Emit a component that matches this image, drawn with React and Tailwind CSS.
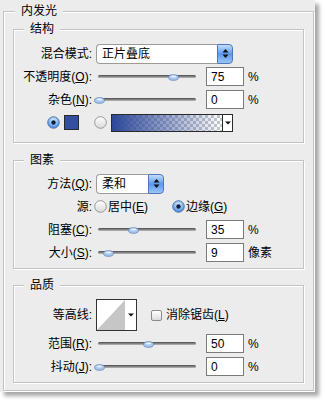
import React from "react";

// ─── small pieces ─────────────────────────────────────────────────────────────
function Key({ t, k }) {
  return (
    <>
      {t}
      {k && (
        <>
          (<span className="underline">{k}</span>)
        </>
      )}
      :
    </>
  );
}

function Group({ title, legendMl = "ml-[10px]", className = "", children }) {
  return (
    <div
      className={`border border-[#c3c3c3] shadow-[1px_1px_0_#fff,inset_1px_1px_0_#fff] ${className}`}
    >
      <div
        className={`-mt-[7px] ${legendMl} w-fit h-[12px] bg-[#ececec] px-[6px] text-[12px] leading-[12px]`}
      >
        {title}
      </div>
      {children}
    </div>
  );
}

function Row({ label, h = "h-[23px]", children }) {
  return (
    <div className={`flex items-center ${h}`}>
      <div className="w-[78px] text-right whitespace-nowrap">{label}</div>
      <div className="ml-[4px] flex items-center">{children}</div>
    </div>
  );
}

function Select({ w, value }) {
  return (
    <div className={`flex h-[20px] ${w}`}>
      <div className="flex-1 flex items-center pl-[5px] bg-white border border-[#9b9b9b] border-r-0 rounded-l-[4px]">
        {value}
      </div>
      <div className="w-[16px] flex items-center justify-center rounded-r-[4px] border border-[#4e78bb] bg-gradient-to-b from-[#c4ddfb] via-[#5b97ec] to-[#9cc5f7]">
        <svg width="7" height="11" viewBox="0 0 7 11">
          <polygon points="0.5,4.5 3.5,1 6.5,4.5" fill="#111" />
          <polygon points="0.5,6.5 3.5,10 6.5,6.5" fill="#111" />
        </svg>
      </div>
    </div>
  );
}

function Slider({ knob }) {
  return (
    <div className="relative w-[102px] h-[12px] flex items-center">
      <div className="ml-[2px] w-[98px] h-[3px] rounded-full bg-gradient-to-b from-[#4a4a4a] to-[#bdbdbd]" />
      <svg
        className="absolute top-[3px]"
        style={{ left: knob - 5 }}
        width="11"
        height="7"
        viewBox="0 0 11 7"
      >
        <ellipse cx="5.5" cy="3.5" rx="5" ry="2.8" fill="#a9c7ee" stroke="#6d8cbd" strokeWidth="0.9" />
        <ellipse cx="5.5" cy="2.6" rx="3" ry="1" fill="#e4f0ff" />
      </svg>
    </div>
  );
}

function Field({ v }) {
  return (
    <div className="ml-[8px] w-[38px] h-[19px] flex items-center pl-[4px] bg-white border border-[#7b7b7b]">
      {v}
    </div>
  );
}

function Radio({ on }) {
  return (
    <svg width="13" height="13" viewBox="0 0 13 13">
      <defs>
        <radialGradient id="rOn" cx="50%" cy="35%" r="65%">
          <stop offset="0%" stopColor="#e6f3ff" />
          <stop offset="60%" stopColor="#7fb4ee" />
          <stop offset="100%" stopColor="#3d7ed6" />
        </radialGradient>
        <linearGradient id="rOff" x1="0" y1="0" x2="0" y2="1">
          <stop offset="0%" stopColor="#ffffff" />
          <stop offset="100%" stopColor="#d9d9d9" />
        </linearGradient>
      </defs>
      <circle
        cx="6.5"
        cy="6.5"
        r="5.8"
        fill={on ? "url(#rOn)" : "url(#rOff)"}
        stroke={on ? "#4f74ad" : "#8e8e8e"}
        strokeWidth="0.9"
      />
      {on && <circle cx="6.5" cy="6.5" r="2.2" fill="#0e1f3f" />}
    </svg>
  );
}

// ─── Main ─────────────────────────────────────────────────────────────────────
export default function App() {
  return (
    <div className="w-[325px] h-[400px] bg-white font-['Liberation_Sans','Noto_Sans_CJK_SC',sans-serif] text-[12px] leading-none text-black">
      <div className="w-[315px] h-[392px] bg-[#ececec] shadow-[4px_4px_4px_rgba(0,0,0,0.35)] pt-[11px] pl-[3px]">
        <Group title="内发光" legendMl="ml-[11px]" className="w-[311px] pb-[7px]">
          {/* 结构 */}
          <Group title="结构" className="mx-[9px] mt-[12px] pb-[8px]">
            <div className="mt-[7px]">
              <Row label={<Key t="混合模式" />}>
                <Select w="w-[137px]" value="正片叠底" />
              </Row>
              <Row label={<Key t="不透明度" k="O" />}>
                <Slider knob={77} />
                <Field v="75" />
                <span className="ml-[4px]">%</span>
              </Row>
              <Row label={<Key t="杂色" k="N" />}>
                <Slider knob={3} />
                <Field v="0" />
                <span className="ml-[4px]">%</span>
              </Row>
              <div className="flex items-center h-[23px] pl-[33px]">
                <Radio on />
                <div className="ml-[4px] w-[15px] h-[15px] bg-[#33509e] border border-[#2a2a2a]" />
                <div className="ml-[15px]">
                  <Radio />
                </div>
                <div className="ml-[4px] flex h-[18px] w-[122px] border border-[#2a2a2a]">
                  <div className="flex-1 bg-[linear-gradient(to_right,#2c4799,rgba(44,71,153,0.55)_45%,rgba(44,71,153,0)),repeating-conic-gradient(#c9c9c9_0_25%,#ffffff_0_50%)] bg-[length:100%_100%,6px_6px]" />
                  <div className="w-[10px] flex items-center justify-center bg-white border-l border-[#2a2a2a]">
                    <svg width="6" height="4" viewBox="0 0 6 4">
                      <polygon points="0,0.5 6,0.5 3,3.5" fill="#111" />
                    </svg>
                  </div>
                </div>
              </div>
            </div>
          </Group>

          {/* 图素 */}
          <Group title="图素" className="mx-[9px] mt-[17px] pb-[4px]">
            <div className="mt-[6px]">
              <Row label={<Key t="方法" k="Q" />}>
                <Select w="w-[68px]" value="柔和" />
              </Row>
              <Row label={<Key t="源" />}>
                <div className="-ml-[2px] w-[78px] flex items-center">
                  <Radio />
                  <span className="ml-[1px]">
                    居中(<span className="underline">E</span>)
                  </span>
                </div>
                <Radio on />
                <span className="ml-[1px]">
                  边缘(<span className="underline">G</span>)
                </span>
              </Row>
              <Row label={<Key t="阻塞" k="C" />}>
                <Slider knob={37} />
                <Field v="35" />
                <span className="ml-[4px]">%</span>
              </Row>
              <Row label={<Key t="大小" k="S" />}>
                <Slider knob={12} />
                <Field v="9" />
                <span className="ml-[4px]">像素</span>
              </Row>
            </div>
          </Group>

          {/* 品质 */}
          <Group title="品质" className="mx-[9px] mt-[16px] pb-[4px]">
            <div className="mt-[7px]">
              <Row label={<Key t="等高线" />} h="h-[34px]">
                <div className="flex w-[41px] h-[32px] border border-[#333] bg-white">
                  <svg width="28" height="30" viewBox="0 0 28 30">
                    <rect width="28" height="30" fill="#fff" />
                    <polygon points="0,30 28,0 28,30" fill="#c6c6c6" />
                  </svg>
                  <div className="flex-1 flex items-center justify-center">
                    <svg width="6" height="4" viewBox="0 0 6 4">
                      <polygon points="0,0.5 6,0.5 3,3.5" fill="#111" />
                    </svg>
                  </div>
                </div>
                <div className="ml-[14px] w-[11px] h-[11px] rounded-[2px] border border-[#8a8a8a] bg-gradient-to-b from-white to-[#dcdcdc]" />
                <span className="ml-[4px]">
                  消除锯齿(<span className="underline">L</span>)
                </span>
              </Row>
              <Row label={<Key t="范围" k="R" />}>
                <Slider knob={52} />
                <Field v="50" />
                <span className="ml-[4px]">%</span>
              </Row>
              <Row label={<Key t="抖动" k="J" />}>
                <Slider knob={3} />
                <Field v="0" />
                <span className="ml-[4px]">%</span>
              </Row>
            </div>
          </Group>
        </Group>
      </div>
    </div>
  );
}
